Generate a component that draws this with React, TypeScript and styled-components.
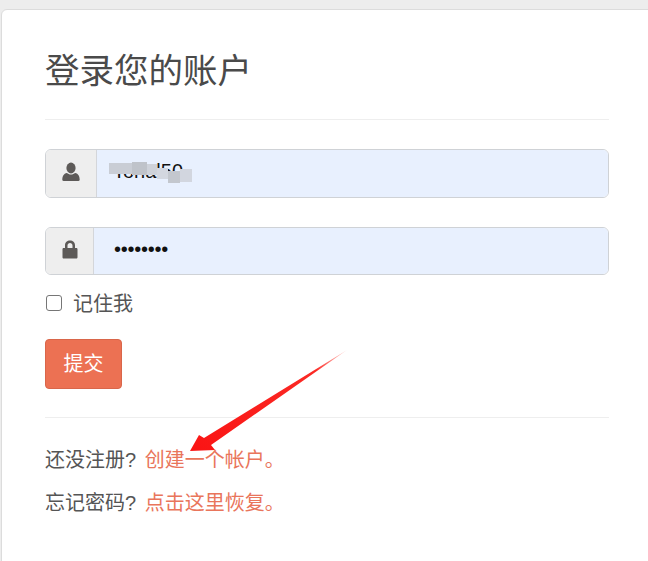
import React from "react";
import styled, { createGlobalStyle } from "styled-components";

const Global = createGlobalStyle`
  html, body { margin: 0; padding: 0; background: #ededed; height: 100%; overflow: hidden; }
  #root { height: 100%; }
  * { box-sizing: border-box; }
`;

const Page = styled.div`
  position: relative;
  width: 648px;
  height: 561px;
  padding: 9px 0 0 1px;
  overflow: hidden;
  font-family: "Liberation Sans", "Noto Sans CJK SC", sans-serif;
  color: #555;
`;

const Card = styled.div`
  width: 660px;
  height: 570px;
  background: #fff;
  border: 1px solid #dcdcdc;
  border-radius: 6px;
  padding: 0 0 0 43px;
`;

const Column = styled.div`
  width: 564px;
  display: flex;
  flex-direction: column;
`;

const Title = styled.h2`
  margin: 35px 0 0;
  font-size: 34.5px;
  line-height: 52px;
  font-weight: 400;
  color: #4a4a4a;
`;

const Rule = styled.hr<{ $top: number; $bottom: number }>`
  width: 100%;
  margin: ${(p) => p.$top}px 0 ${(p) => p.$bottom}px;
  border: 0;
  border-top: 1px solid #eeeeee;
`;

const Group = styled.div<{ $height: number; $bottom: number }>`
  position: relative;
  display: flex;
  height: ${(p) => p.$height}px;
  margin-bottom: ${(p) => p.$bottom}px;
  border: 1px solid #cfd2d6;
  border-radius: 6px;
  overflow: hidden;
`;

const Addon = styled.span<{ $width: number }>`
  flex: 0 0 ${(p) => p.$width}px;
  display: flex;
  align-items: center;
  justify-content: center;
  padding-bottom: 4px;
  background: #eeeeee;
  border-right: 1px solid #d4d6da;
  color: #5d5a58;
`;

const Field = styled.input<{ $left: number; $tight?: boolean }>`
  flex: 1;
  min-width: 0;
  padding: 0 20px 4px ${(p) => p.$left}px;
  border: 0;
  outline: 0;
  background: #e8f0fe;
  color: #111;
  font-family: "Liberation Sans", sans-serif;
  font-size: 20px;
  letter-spacing: ${(p) => (p.$tight ? "-0.25px" : "0")};
`;

const Mosaic = styled.div`
  position: absolute;
  z-index: 2;
  left: 63px;
  top: 12px;
  display: grid;
  grid-template-columns: 23px 15px 10px 11px 12px 12px;
  grid-template-rows: repeat(22, 1px);
`;

const Tile = styled.i<{ $shade: string; $col: number; $top: number; $span: number }>`
  display: block;
  grid-column: ${(p) => p.$col};
  grid-row: ${(p) => p.$top + 1} / span ${(p) => p.$span};
  background: ${(p) => p.$shade};
`;

const Check = styled.label`
  display: flex;
  align-items: center;
  height: 30px;
  margin: 12px 0 22px;
  font-size: 20px;
  color: #555;
`;

const Box = styled.span`
  width: 16px;
  height: 16px;
  margin: 1px 11px 0 1px;
  border: 1.5px solid #767676;
  border-radius: 3px;
  background: #fff;
`;

const Submit = styled.button`
  align-self: flex-start;
  width: 77px;
  height: 50px;
  padding: 0 0 4px;
  border: 1px solid #d9664a;
  border-radius: 4px;
  background: #ec7153;
  color: #fff;
  font-family: inherit;
  font-size: 20px;
`;

const Line = styled.p`
  margin: 0 0 13px;
  height: 30px;
  line-height: 30px;
  font-size: 20px;
  color: #555;
`;

const Link = styled.a`
  color: #e9755b;
  text-decoration: none;
  margin-left: 3px;
`;

const Arrow = styled.svg`
  position: absolute;
  left: 185px;
  top: 345px;
  width: 170px;
  height: 112px;
`;

const tiles = [
  { s: "#c9cdd5", t: 1, h: 11 },
  { s: "#bfc3ca", t: 0, h: 13 },
  { s: "#ced2da", t: 2, h: 11 },
  { s: "#d3d7e0", t: 6, h: 11 },
  { s: "#c3c7ce", t: 9, h: 12 },
  { s: "#d2d6df", t: 7, h: 13 },
];

export default function App() {
  return (
    <Page>
      <Global />
      <Card>
        <Column>
          <Title>登录您的账户</Title>
          <Rule $top={22} $bottom={29} />
          <Group $height={49} $bottom={29}>
            <Addon $width={51}>
              <svg width="18" height="20" viewBox="0 0 18 20" fill="currentColor">
                <ellipse cx="9" cy="6" rx="4.6" ry="5.4" />
                <path d="M1.5 19c-.8 0-1.2-.5-1.2-1.2 0-3.6 1.4-6.5 4.6-6.9 1 .9 2.6 1.5 4.1 1.5s3.100-.6 4.100-1.500c3.200.4 4.600 3.300 4.600 6.900 0 .7-.4 1.200-1.200 1.200z" />
              </svg>
            </Addon>
            <Field type="text" defaultValue="Tonal50" readOnly $left={16} />
            <Mosaic aria-hidden="true">
              {tiles.map((t, i) => (
                <Tile key={i} $shade={t.s} $col={i + 1} $top={t.t} $span={t.h} />
              ))}
            </Mosaic>
          </Group>
          <Group $height={48} $bottom={0}>
            <Addon $width={48}>
              <svg width="16" height="19" viewBox="0 0 16 19" fill="currentColor">
                <path fillRule="evenodd" d="M3 8V5.500C3 2.500 5.200.6 8 .6s5 1.900 5 4.900V8h1.200c.8 0 1.300.5 1.300 1.300v7.900c0 .8-.5 1.300-1.300 1.300H1.800c-.8 0-1.300-.5-1.300-1.300V9.300C.5 8.500 1 8 1.800 8zm2.500 0h5V5.500C10.500 4 9.400 3 8 3S5.500 4 5.500 5.500z" />
              </svg>
            </Addon>
            <Field type="password" defaultValue="12345678" readOnly $left={20} $tight />
          </Group>
          <Check>
            <Box />
            记住我
          </Check>
          <Submit type="button">提交</Submit>
          <Rule $top={28} $bottom={27} />
          <Line>
            还没注册? <Link href="#">创建一个帐户。</Link>
          </Line>
          <Line>
            忘记密码? <Link href="#">点击这里恢复。</Link>
          </Line>
        </Column>
      </Card>
      <Arrow viewBox="0 0 170 112" aria-hidden="true">
        <defs>
          <linearGradient id="tail" x1="1" y1="0" x2="0" y2="1">
            <stop offset="0" stopColor="#ff3b30" stopOpacity="0.2" />
            <stop offset="0.2" stopColor="#fb2a25" />
            <stop offset="1" stopColor="#fa1414" />
          </linearGradient>
        </defs>
        <path d="M162 5 L19 93 L14 90 L5 106 L30 105 L26 100 Z" fill="url(#tail)" />
      </Arrow>
    </Page>
  );
}
